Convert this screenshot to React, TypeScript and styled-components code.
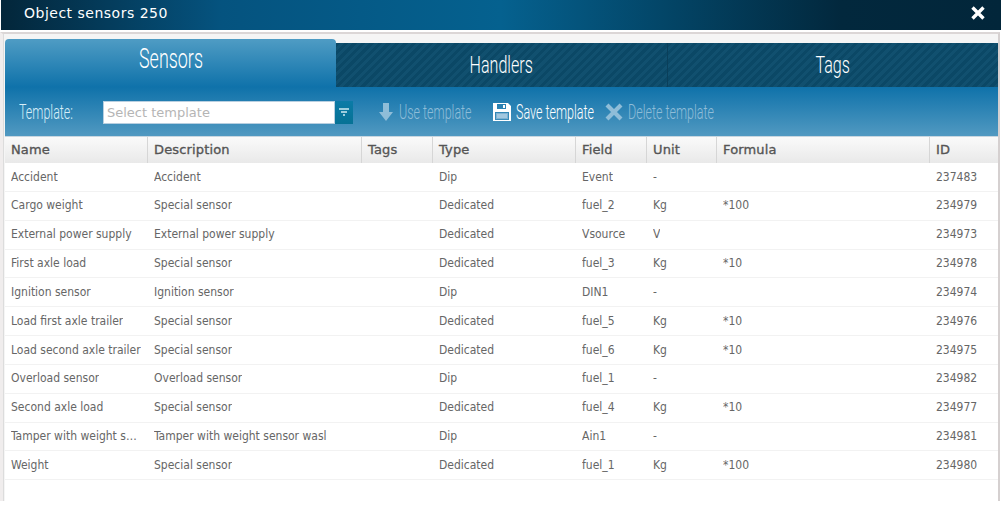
import React from 'react';
import styled, { createGlobalStyle } from 'styled-components';

const GlobalStyle = createGlobalStyle`
  html, body {
    margin: 0;
    padding: 0;
    background: #fff;
    overflow: hidden;
  }
  * {
    box-sizing: border-box;
  }
`;

const COLUMNS = '143px 214px 71px 143px 71px 70px 213px 1fr';
const NARROW = `Roboto, "Liberation Sans", sans-serif`;
const BODY_FONT = `"DejaVu Sans Condensed", "Open Sans", sans-serif`;

const Dialog = styled.div`
  width: 1001px;
  height: 501px;
  display: flex;
  flex-direction: column;
  background: #fff;
`;

const TitleBar = styled.div`
  height: 30px;
  flex: none;
  margin-left: 1px;
  display: flex;
  align-items: center;
  justify-content: space-between;
  padding: 0 15px 4px 23px;
  background: linear-gradient(90deg, #03263a 0%, #05537f 22%, #05618f 50%, #034668 66%, #02283d 84%, #02263a 100%);
  color: #fff;
  font: 14px/1 "DejaVu Sans", sans-serif;
  letter-spacing: 0.5px;
`;

const Body = styled.div`
  width: 1000px;
  flex: 1;
  margin-top: 2px;
  display: flex;
  flex-direction: column;
  padding: 5px 0 0 2px;
  background: #f5f5f5;
  border-top: 2px solid #dbd6d6;
  border-right: 2px solid #d5d0d0;
  border-left: 3px solid #f0eded;
  box-shadow: inset 1px 0 0 #dcdcdc;
`;

const TabRow = styled.div`
  display: flex;
  height: 48px;
  flex: none;
  align-items: flex-end;
`;

const Tab = styled.div<{ $active?: boolean; $divider?: boolean; $width: number }>`
  width: ${(p) => p.$width}px;
  flex: ${(p) => (p.$width ? 'none' : 1)};
  height: ${(p) => (p.$active ? 48 : 44)}px;
  display: flex;
  justify-content: center;
  align-items: center;
  padding-bottom: ${(p) => (p.$active ? 8 : 1)}px;
  color: #fff;
  font: 300 ${(p) => (p.$active ? 28 : 24)}px/1 ${NARROW};
  border-radius: ${(p) => (p.$active ? '4px 4px 0 0' : 0)};
  background: ${(p) =>
    p.$active
      ? 'linear-gradient(180deg, #4f9cc4 0%, #0f72aa 100%)'
      : 'repeating-linear-gradient(135deg, #0b4866 0 3px, #11506f 3px 6px)'};
  border-left: ${(p) => (p.$divider ? '1px solid #0a3f5a' : 0)};
`;

const TabText = styled.span<{ $squeeze: number }>`
  display: inline-block;
  transform: scaleX(${(p) => p.$squeeze});
`;

const Toolbar = styled.div`
  height: 49px;
  flex: none;
  display: flex;
  align-items: center;
  padding: 1px 0 0 14px;
  background: linear-gradient(180deg, #0f72aa 0%, #5199c1 100%);
`;

const ToolLabel = styled.span<{ $dim?: boolean }>`
  display: inline-block;
  color: ${(p) => (p.$dim ? '#8fbdd8' : '#fff')};
  font: 300 20px/1 ${NARROW};
  transform: scaleX(0.625);
  transform-origin: left center;
  white-space: nowrap;
`;

const TemplateLabel = styled(ToolLabel)`
  width: 84px;
  color: #d8eef8;
`;

const Select = styled.div`
  width: 232px;
  height: 23px;
  flex: none;
  display: flex;
  align-items: center;
  padding-left: 3px;
  background: #fff;
  border: 1px solid #b8cfe0;
  color: #b5b5b5;
  font: 13px/1 "DejaVu Sans", sans-serif;
`;

const SelectButton = styled.div`
  width: 18px;
  height: 23px;
  flex: none;
  display: flex;
  align-items: center;
  justify-content: center;
  background: linear-gradient(180deg, #0b7ba7 0%, #067295 100%);
`;

const ToolButton = styled.div<{ $width: number; $offset?: number }>`
  width: ${(p) => p.$width}px;
  margin-left: ${(p) => p.$offset || 0}px;
  flex: none;
  display: flex;
  align-items: center;
  gap: 5px;

  svg {
    flex: none;
  }
`;

const Grid = styled.div`
  flex: 1;
  background: #fff;
  display: flex;
  flex-direction: column;
`;

const HeaderRow = styled.div`
  display: grid;
  grid-template-columns: ${COLUMNS};
  height: 27px;
  flex: none;
  background: linear-gradient(180deg, #fafafa 0%, #e9e9e9 100%);
  border-top: 1px solid #c8d6e0;
`;

const HeaderCell = styled.div`
  display: flex;
  align-items: center;
  padding: 0 0 2px 6px;
  border-right: 1px solid #d6d6d6;
  color: #555;
  font: 13px/1 "DejaVu Sans", sans-serif;
  -webkit-text-stroke: 0.35px #555;
  letter-spacing: 0.15px;

  &:last-child {
    border-right: 0;
  }
`;

const Row = styled.div`
  display: grid;
  grid-template-columns: ${COLUMNS};
  height: 28.85px;
  flex: none;
  border-bottom: 1px solid #f2f2f2;
`;

const Cell = styled.div`
  display: flex;
  align-items: center;
  padding: 0 6px;
  color: #666;
  font: 12px/1.4 ${BODY_FONT};
  white-space: nowrap;
  overflow: hidden;
`;

const Ellipsis = styled.span`
  overflow: hidden;
  text-overflow: ellipsis;
`;

const headers = ['Name', 'Description', 'Tags', 'Type', 'Field', 'Unit', 'Formula', 'ID'];

const rows = [
  ['Accident', 'Accident', '', 'Dip', 'Event', '-', '', '237483'],
  ['Cargo weight', 'Special sensor', '', 'Dedicated', 'fuel_2', 'Kg', '*100', '234979'],
  ['External power supply', 'External power supply', '', 'Dedicated', 'Vsource', 'V', '', '234973'],
  ['First axle load', 'Special sensor', '', 'Dedicated', 'fuel_3', 'Kg', '*10', '234978'],
  ['Ignition sensor', 'Ignition sensor', '', 'Dip', 'DIN1', '-', '', '234974'],
  ['Load first axle trailer', 'Special sensor', '', 'Dedicated', 'fuel_5', 'Kg', '*10', '234976'],
  ['Load second axle trailer', 'Special sensor', '', 'Dedicated', 'fuel_6', 'Kg', '*10', '234975'],
  ['Overload sensor', 'Overload sensor', '', 'Dip', 'fuel_1', '-', '', '234982'],
  ['Second axle load', 'Special sensor', '', 'Dedicated', 'fuel_4', 'Kg', '*10', '234977'],
  ['Tamper with weight sensor wasl', 'Tamper with weight sensor wasl', '', 'Dip', 'Ain1', '-', '', '234981'],
  ['Weight', 'Special sensor', '', 'Dedicated', 'fuel_1', 'Kg', '*100', '234980'],
];

const App = () => {
  return (
    <Dialog>
      <GlobalStyle />
      <TitleBar>
        <span>Object sensors 250</span>
        <svg width="16" height="16" viewBox="0 0 16 16">
          <path d="M2.5 2.5 L13.5 13.5 M13.5 2.5 L2.5 13.5" stroke="#fff" strokeWidth="3.4" />
        </svg>
      </TitleBar>
      <Body>
        <TabRow>
          <Tab $active $width={331}><TabText $squeeze={0.64}>Sensors</TabText></Tab>
          <Tab $width={331}><TabText $squeeze={0.67}>Handlers</TabText></Tab>
          <Tab $width={0} $divider><TabText $squeeze={0.67}>Tags</TabText></Tab>
        </TabRow>
        <Toolbar>
          <TemplateLabel>Template:</TemplateLabel>
          <Select>Select template</Select>
          <SelectButton>
            <svg width="10" height="8" viewBox="0 0 10 8">
              <path d="M0 1h10M2 4h6M4 7h2" stroke="#cfeaf2" strokeWidth="1.4" />
            </svg>
          </SelectButton>
          <ToolButton $width={115} $offset={25}>
            <svg width="16" height="20" viewBox="0 0 16 20">
              <path d="M5 1h6v9h4l-7 9-7-9h4z" fill="#8fbdd8" />
            </svg>
            <ToolLabel $dim>Use template</ToolLabel>
          </ToolButton>
          <ToolButton $width={112}>
            <svg width="18" height="18" viewBox="0 0 18 18">
              <path fillRule="evenodd" d="M0 0h15l3 3v15H0z M4 1v5h9V1z M2 9v8h14V9z" fill="#fff" />
              <path d="M10 2h2v3h-2z" fill="#fff" />
              <path d="M3 10h12v6H3z" fill="#7fb2d2" />
              <path d="M4 12h10M4 14h10" stroke="#d8e8f2" strokeWidth="0.8" />
            </svg>
            <ToolLabel>Save template</ToolLabel>
          </ToolButton>
          <ToolButton $width={120}>
            <svg width="18" height="18" viewBox="0 0 18 18">
              <path d="M2 2 L16 16 M16 2 L2 16" stroke="#8fbdd8" strokeWidth="4.2" />
            </svg>
            <ToolLabel $dim>Delete template</ToolLabel>
          </ToolButton>
        </Toolbar>
        <Grid>
          <HeaderRow>
            {headers.map((h) => (
              <HeaderCell key={h}>{h}</HeaderCell>
            ))}
          </HeaderRow>
          {rows.map((row) => (
            <Row key={row[7]}>
              {row.map((value, i) => (
                <Cell key={i}>
                  <Ellipsis>{value}</Ellipsis>
                </Cell>
              ))}
            </Row>
          ))}
        </Grid>
      </Body>
    </Dialog>
  );
};

export default App;
